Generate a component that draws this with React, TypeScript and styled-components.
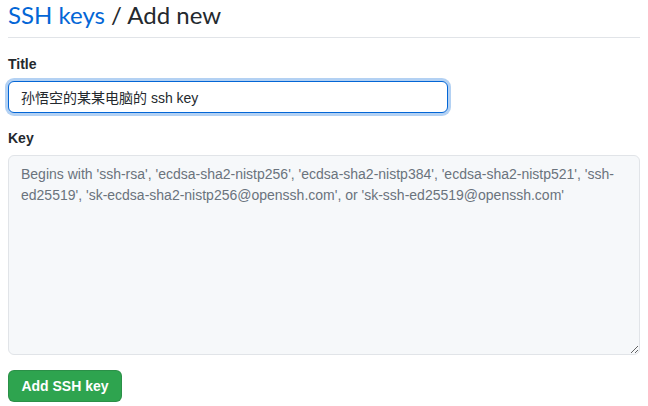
import React, { useState } from 'react';
import styled, { createGlobalStyle } from 'styled-components';

const GlobalStyle = createGlobalStyle`
  html, body {
    margin: 0;
    padding: 0;
    background: #fff;
  }
  body {
    font-family: "Liberation Sans", "Noto Sans CJK SC", Arial, sans-serif;
    font-size: 14px;
    line-height: 1.5;
    color: #24292e;
  }
`;

const Page = styled.div`
  padding: 0 8px;
  width: 632px;
`;

const Subhead = styled.div`
  display: flex;
  align-items: center;
  padding-bottom: 7px;
  border-bottom: 1px solid #e1e4e8;
  margin-bottom: 16px;
`;

const Heading = styled.h2`
  margin: 0;
  font-family: Lato, "Liberation Sans", sans-serif;
  font-size: 24px;
  font-weight: 400;
  line-height: 29px;
  padding-bottom: 1px;
`;

const Crumb = styled.a`
  color: #0366d6;
  text-decoration: none;
`;

const Form = styled.form`
  display: flex;
  flex-direction: column;
`;

const Group = styled.div`
  display: flex;
  flex-direction: column;
  margin-bottom: 15px;
`;

const Label = styled.label`
  font-weight: 600;
  font-size: 14px;
  line-height: 21px;
  margin-bottom: 6px;
`;

const TitleInput = styled.input`
  box-sizing: border-box;
  width: 440px;
  height: 32px;
  padding: 5px 12px;
  font-family: "Liberation Sans", "Noto Sans CJK SC", sans-serif;
  font-size: 14px;
  color: #24292e;
  background: #fff;
  border: 1px solid #0366d6;
  border-radius: 6px;
  box-shadow: 0 0 0 3px rgba(3, 102, 214, 0.3);
  outline: none;
`;

const KeyArea = styled.textarea`
  box-sizing: border-box;
  width: 632px;
  height: 200px;
  padding: 8px 12px;
  font-family: "Liberation Sans", "Noto Sans CJK SC", sans-serif;
  font-size: 14px;
  line-height: 21px;
  color: #24292e;
  background: #f6f8fa;
  border: 1px solid #e1e4e8;
  border-radius: 6px;
  outline: none;
  resize: vertical;

  &::placeholder {
    color: #6a737d;
  }
`;

const Actions = styled.div`
  display: flex;
`;

const SubmitButton = styled.button`
  box-sizing: border-box;
  width: 114px;
  height: 32px;
  padding: 0;
  font-family: "Liberation Sans", sans-serif;
  font-size: 14px;
  font-weight: 700;
  color: #fff;
  background: #2ea44f;
  border: 1px solid rgba(27, 31, 35, 0.15);
  border-radius: 6px;
  cursor: pointer;
`;

const App = () => {
  const [title, setTitle] = useState('孙悟空的某某电脑的 ssh key');
  const [key, setKey] = useState('');

  return (
    <>
      <GlobalStyle />
      <Page>
        <Subhead>
          <Heading>
            <Crumb href="#">SSH keys</Crumb> / Add new
          </Heading>
        </Subhead>
        <Form onSubmit={(e) => e.preventDefault()}>
          <Group>
            <Label htmlFor="key-title">Title</Label>
            <TitleInput id="key-title" value={title} onChange={(e) => setTitle(e.target.value)} />
          </Group>
          <Group>
            <Label htmlFor="key-body">Key</Label>
            <KeyArea
              id="key-body"
              value={key}
              onChange={(e) => setKey(e.target.value)}
              placeholder="Begins with 'ssh-rsa', 'ecdsa-sha2-nistp256', 'ecdsa-sha2-nistp384', 'ecdsa-sha2-nistp521', 'ssh-ed25519', 'sk-ecdsa-sha2-nistp256@openssh.com', or 'sk-ssh-ed25519@openssh.com'"
            />
          </Group>
          <Actions>
            <SubmitButton type="submit">Add SSH key</SubmitButton>
          </Actions>
        </Form>
      </Page>
    </>
  );
};

export default App;
